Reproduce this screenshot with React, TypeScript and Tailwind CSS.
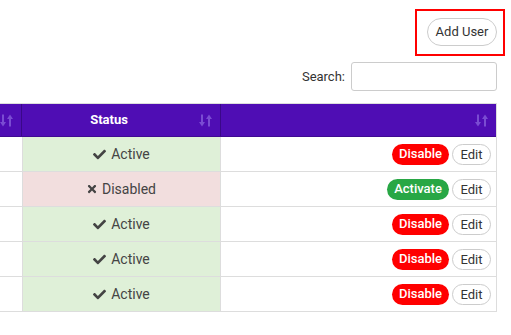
import React from 'react';
import { FaCheck, FaTimes } from 'react-icons/fa';

type Row = { active: boolean };

const rows: Row[] = [
  { active: true },
  { active: false },
  { active: true },
  { active: true },
  { active: true },
];

const SortIcon = () => (
  <svg width="13" height="13" viewBox="0 0 13 13" fill="#7a4cd2">
    {/* down arrow */}
    <rect x="2" y="0.5" width="2" height="9" />
    <path d="M0 8h6l-3 4.5z" />
    {/* up arrow */}
    <rect x="9" y="3.5" width="2" height="9" />
    <path d="M7 5h6l-3-4.5z" />
  </svg>
);

const App: React.FC = () => {
  return (
    <div className="w-[511px] h-[335px] overflow-hidden bg-white font-['Roboto',sans-serif] text-[#333]">
      {/* Add user */}
      <div className="flex justify-end pt-[9px] pr-[6px]">
        <div className="border-2 border-[#ff0000] w-[90px] h-[47px] pl-[10px] pt-[7px]">
          <button className="h-[28px] w-[70px] rounded-full border border-[#ccc] text-[13px] text-[#333] bg-white">
            Add User
          </button>
        </div>
      </div>

      {/* Search */}
      <div className="flex justify-end items-center mt-[6px] pr-[14px] gap-[6px]">
        <label className="text-[13px] text-[#333]">Search:</label>
        <input className="w-[146px] h-[29px] border border-[#ccc] rounded-[3px]" />
      </div>

      {/* Table */}
      <div className="mt-[12px] w-[497px] border-t border-r border-[#ddd]">
        <div className="flex h-[33px] bg-[#4f0db4] text-white text-[13px] font-bold border-b border-[#3f0a92]">
          <div className="w-[22px] flex items-center justify-end pr-[8px] border-r border-[#3a0888]">
            <SortIcon />
          </div>
          <div className="w-[199px] relative flex items-center justify-center pr-[24px] border-r border-[#3a0888]">
            Status
            <span className="absolute right-[8px] top-[10px]">
              <SortIcon />
            </span>
          </div>
          <div className="flex-1 flex items-center justify-end pr-[8px]">
            <SortIcon />
          </div>
        </div>
        {rows.map((r, i) => (
          <div key={i} className="flex h-[35px] border-b border-[#ddd] text-[14px]">
            <div className="w-[22px]" />
            <div
              className={
                'w-[199px] flex items-center justify-center gap-[5px] text-[#444] border-l border-r border-[#ddd] ' +
                (r.active ? 'bg-[#dff0d8]' : 'bg-[#f2dede]')
              }
            >
              {r.active ? (
                <FaCheck className="w-[13px] h-[13px]" />
              ) : (
                <FaTimes className="w-[10px] h-[12px]" />
              )}
              {r.active ? 'Active' : 'Disabled'}
            </div>
            <div className="flex-1 flex items-center justify-end gap-[3px] pr-[5px]">
              {r.active ? (
                <button className="h-[21px] w-[57px] rounded-full bg-[#ff0000] text-white text-[13px] font-medium">
                  Disable
                </button>
              ) : (
                <button className="h-[21px] w-[62px] rounded-full bg-[#28a745] text-white text-[13px] font-medium">
                  Activate
                </button>
              )}
              <button className="h-[21px] w-[39px] rounded-full border border-[#ccc] bg-white text-[13px] text-[#333]">
                Edit
              </button>
            </div>
          </div>
        ))}
      </div>
    </div>
  );
};

export default App;
